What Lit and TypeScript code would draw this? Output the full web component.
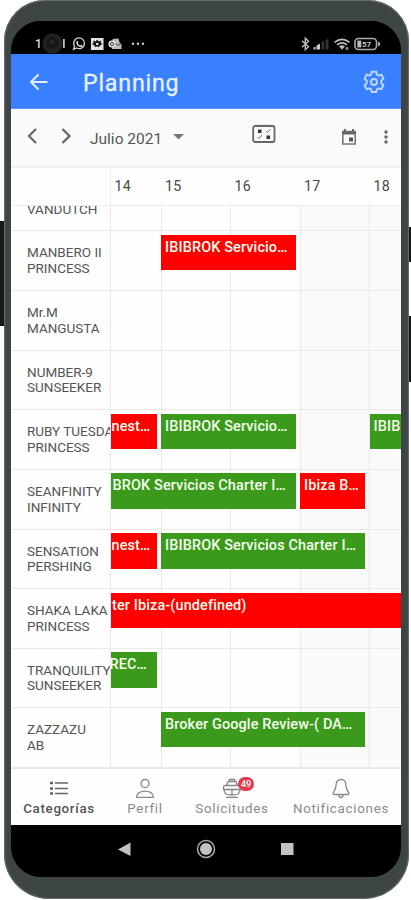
import { LitElement, html, css, svg } from "lit";
import { customElement } from "lit/decorators.js";
import { classMap } from "lit/directives/class-map.js";
import { styleMap } from "lit/directives/style-map.js";

interface Booking {
  from: number;
  to: number;
  label: string;
  color: "red" | "green";
  shift?: number;
}

interface Boat {
  lines: string[];
  bookings: Booking[];
}

const LONG = "IBIBROK Servicio…";

const BOATS: Boat[] = [
  { lines: ["MANBERO II", "PRINCESS"], bookings: [{ from: 2, to: 4, label: LONG, color: "red" }] },
  { lines: ["Mr.M", "MANGUSTA"], bookings: [] },
  { lines: ["NUMBER-9", "SUNSEEKER"], bookings: [] },
  {
    lines: ["RUBY TUESDA", "PRINCESS"],
    bookings: [
      { from: 1, to: 2, label: "nest…", color: "red", shift: 1 },
      { from: 2, to: 4, label: LONG, color: "green" },
      { from: 5, to: 6, label: "IBIB", color: "green" },
    ],
  },
  {
    lines: ["SEANFINITY", "INFINITY"],
    bookings: [
      { from: 1, to: 4, label: "BROK Servicios Charter I…", color: "green", shift: 2 },
      { from: 4, to: 5, label: "Ibiza B…", color: "red" },
    ],
  },
  {
    lines: ["SENSATION", "PERSHING"],
    bookings: [
      { from: 1, to: 2, label: "nest…", color: "red", shift: 1 },
      { from: 2, to: 5, label: "IBIBROK Servicios Charter I…", color: "green" },
    ],
  },
  { lines: ["SHAKA LAKA", "PRINCESS"], bookings: [{ from: 1, to: 6, label: "ter Ibiza-(undefined)", color: "red", shift: 1.5 }] },
  { lines: ["TRANQUILITY", "SUNSEEKER"], bookings: [{ from: 1, to: 2, label: "REC…", color: "green", shift: -1 }] },
  { lines: ["ZAZZAZU", "AB"], bookings: [{ from: 2, to: 5, label: "Broker Google Review-( DA…", color: "green" }] },
];

@customElement("status-bar")
class StatusBar extends LitElement {
  static styles = css`
    :host { display: flex; height: 33px; box-sizing: border-box; padding: 12px 20px 0 24px; background: #000; justify-content: space-between; }
    svg { display: block; }
    .num { font: 700 8px Roboto, sans-serif; fill: #ccc; }
    .clock { font: 500 12px Roboto, sans-serif; fill: #ddd; }
  `;
  render() {
    return html`
      <svg width="112" height="21" viewBox="35 33 112 21">
        <text class="clock" x="35" y="48">1</text>
        <rect x="63" y="39" width="1.8" height="9" fill="#bbb" />
        <circle cx="52.5" cy="43.5" r="10.2" fill="#202222" />
        <circle cx="52.5" cy="43" r="6" fill="#171919" />
        <circle cx="52" cy="42" r="2" fill="#292c2c" />
        <path d="M73.5 49.3l1-3.2a5.4 5.4 0 1 1 2 1.9z" fill="none" stroke="#d5d5d5" stroke-width="1.3" />
        <path d="M76.6 41.2q.8-1 1.4.3l.3 1-.5.8q.8 1.7 2.4 2.2l.9-.8 1.5.8q-.5 2-2.5 1.5-3.3-1-4-4z" fill="#d5d5d5" />
        <rect x="91" y="38" width="12.5" height="12" fill="#e4e4e4" />
        <path d="M97.200 39.500l1.500 2 2.600-1-.6 2.500 2 1-2 1-2 2.200-1.500-1-1.500 1-2-2.200-2-1 2-1-.6-2.500 2.600 1z" fill="#111" />
        <circle cx="97.200" cy="44" r="1.300" fill="#ddd" />
        <path d="M112.500 39l6-.5 1 4 2 1.500v5h-9.500z" fill="#bbb" />
        <rect x="108.500" y="40.500" width="7" height="7" rx="3" fill="#ddd" />
        <circle cx="112" cy="44" r="1.600" fill="none" stroke="#444" />
        <path d="M115.500 43.500l2.500 1.800 3-1.500" fill="none" stroke="#444" />
        <circle cx="133" cy="43.7" r="1.2" fill="#ccc" /><circle cx="138" cy="43.7" r="1.2" fill="#ccc" /><circle cx="143" cy="43.7" r="1.2" fill="#ccc" />
      </svg>
      <svg width="82" height="21" viewBox="299 33 82 21">
        <path d="M302 40.700l6.500 6-3.200 3v-11.500l3.200 3-6.500 6" fill="none" stroke="#bbb" stroke-width="1.400" />
        <path d="M313.500 49.5v-2l2-1v3zM316.500 49.5v-4l3.500-2v6z" fill="#ccc" />
        <path d="M321.500 49.5v-7.500l2.700-1.400v8.900zM325.500 49.5v-9.500l3-1.200v10.700z" fill="#333" />
        <path d="M334.500 42.300q7.500-6 15 0M337 44.800q5-4 10 0" fill="none" stroke="#bbb" stroke-width="1.700" />
        <path d="M339 46.300q3-2 6 0l-3 3.500z" fill="#bbb" />
        <circle cx="347" cy="48.500" r="1.700" fill="#777" />
        <rect x="355" y="38.500" width="21.500" height="11" rx="3.500" fill="none" stroke="#aaa" stroke-width="1.600" />
        <rect x="357.300" y="40.600" width="4" height="6.800" fill="#bbb" />
        <path d="M378 41.500l2 1.200v2.600l-2 1.200z" fill="#aaa" />
        <text class="num" x="362" y="47">57</text>
      </svg>
    `;
  }
}

@customElement("title-bar")
class TitleBar extends LitElement {
  static styles = css`
    :host { display: flex; align-items: center; height: 55px; box-sizing: border-box; padding: 2px 15px 0 18px; background: #3880ff; border-bottom: 1px solid #5c94f5; }
    h1 { flex: 1; margin: 2px 0 0 33px; color: #e7f1ff; font: 400 23.200px/30px Roboto, sans-serif; letter-spacing: 0.800px; -webkit-text-stroke: 0.300px #e7f1ff; }
    svg { display: block; }
  `;
  render() {
    return html`
      <svg width="21" height="20" viewBox="0 0 21 20" fill="none" stroke="#e2ecff" stroke-width="2"><path d="M9.500 2.500L2 10l7.500 7.500M2 10h16.500" /></svg>
      <h1>Planning</h1>
      <svg width="24" height="24" viewBox="0 0 24 24" fill="none" stroke="#bdd6ff" stroke-width="2" stroke-linejoin="round">
        <path d="M9.700 1.800h4.600l.6 2.800 1.600.9 2.700-.9 2.300 4-2.100 1.900v2.900l2.100 1.900-2.300 4-2.700-.9-1.600.9-.6 2.800H9.700l-.6-2.800-1.600-.9-2.700.9-2.300-4 2.100-1.900v-2.900L2.500 8.600l2.300-4 2.700.9 1.600-.9z" />
        <circle cx="12" cy="12" r="3" />
      </svg>
    `;
  }
}

@customElement("month-toolbar")
class MonthToolbar extends LitElement {
  static styles = css`
    :host { display: flex; align-items: center; height: 59px; box-sizing: border-box; padding: 0 10px 3px 14px; background: #fafafa; border-bottom: 2px solid #f0f0f0; color: #555; }
    svg { display: block; flex: none; }
    .month { margin-left: 15px; padding-top: 5px; width: 83px; white-space: nowrap; font: 400 15.500px/20px Roboto, sans-serif; }
    .caret { margin-top: 2px; }
    .grid { margin: -5px 0 0 67px; }
    .today { margin: 2px 0 0 65px; }
    .more { margin: 2px 0 0 26px; }
  `;
  render() {
    return html`
      <svg width="50" height="18" viewBox="0 0 50 18" fill="none" stroke="#666" stroke-width="2.200"><path d="M11 2L4 9l7 7M37.500 2l7 7-7 7" /></svg>
      <span class="month">Julio 2021</span>
      <svg class="caret" width="12" height="8" viewBox="0 0 12 8"><path d="M0 1h11L5.500 6.500z" fill="#777" /></svg>
      <svg class="grid" width="24" height="20" viewBox="0 0 24 20">
        <rect x="1.200" y="2" width="21.300" height="16" rx="2" fill="none" stroke="#666" stroke-width="1.800" />
        <path d="M6 .500v2M9.500.500v2M13 .500v2M16.500.500v2" stroke="#777" />
        <path d="M6 5.500h3.500V9H6zM14.500 11.500H18V15h-3.500z" fill="#333" />
        <path d="M14 7l1.500 1.500L18.500 5M5.500 13L7 14.500l3-3.500" stroke="#777" fill="none" />
      </svg>
      <svg class="today" width="16" height="18" viewBox="0 0 16 18">
        <path d="M1.800 3.500h12.400v12.500H1.800z" fill="none" stroke="#777" stroke-width="1.600" />
        <path d="M1 3h14v3.500H1zM3 1h2v3H3zM11 1h2v3h-2z" fill="#666" /><path d="M8 9.500h4v4H8z" fill="#555" />
      </svg>
      <svg class="more" width="6" height="18" viewBox="0 0 6 18" fill="#666"><circle cx="3" cy="4" r="1.700" /><circle cx="3" cy="9" r="1.700" /><circle cx="3" cy="14" r="1.700" /></svg>
    `;
  }
}

@customElement("planning-grid")
class PlanningGrid extends LitElement {
  static styles = css`
    :host { display: flex; flex-direction: column; height: 600px; overflow: hidden; background: #fefefe; font-family: Roboto, sans-serif; color: #555; }
    .row, .days { display: grid; grid-template-columns: 99px 50.500px 69.500px 69.500px 69.500px 1fr; flex: none; }
    .days { height: 37px; border-bottom: 1px solid #ececec; font-size: 14.200px; line-height: 37px; color: #484848; letter-spacing: 0.350px; }
    .days span { padding-left: 4.500px; }
    .days .first { border-left: 1px solid #eee; padding-left: 4px; margin-left: -0.500px; }
    .row { height: 59.650px; box-sizing: border-box; border-bottom: 1px solid #e9e9e9; }
    .row.cut { height: 25.300px; overflow: hidden; }
    .cut .name { padding-top: 0; margin-top: -4.500px; }
    .name { grid-row: 1; grid-column: 1; padding: 14px 0 0 16px; font-size: 13.500px; line-height: 15.700px; white-space: nowrap; }
    .cell { grid-row: 1; border-left: 1px solid #e9e9e9; }
    .weekend { background: #fafafa; }
    .booking { grid-row: 1; z-index: 1; height: 35.500px; margin: 3.500px 4px 0 0.500px; overflow: hidden; box-sizing: border-box; padding: 4px 0 0 4px; color: #f5fff0; font-size: 14.450px; font-weight: 500; line-height: 18px; white-space: nowrap; letter-spacing: 0.130px; }
    .booking.open { margin-right: 0; }
    .booking.clipped { padding-left: 0; }
    .red { background: #fe0000; }
    .green { background: #3b9a1b; }
    .label { display: block; }
  `;

  cells() {
    return [2, 3, 4, 5, 6].map(
      (c) => html`<div class=${classMap({ cell: true, weekend: c > 4 })} style=${styleMap({ gridColumn: String(c) })}></div>`
    );
  }

  booking(b: Booking) {
    const clipped = b.shift !== undefined;
    return html`<div
      class=${classMap({ booking: true, red: b.color === "red", green: b.color === "green", open: b.to === 6, clipped })}
      style=${styleMap({ gridColumn: `${b.from + 1} / ${b.to + 1}` })}
    ><span class="label" style=${styleMap({ marginLeft: `${b.shift ?? 0}px` })}>${b.label}</span></div>`;
  }

  render() {
    return html`
      <div class="days"><span></span><span class="first">14</span><span>15</span><span>16</span><span>17</span><span>18</span></div>
      <div class="row cut"><div class="name">VANDUTCH</div>${this.cells()}</div>
      ${BOATS.map(
        (boat) => html`<div class="row">
          <div class="name">${boat.lines.map((l) => html`<div>${l}</div>`)}</div>
          ${this.cells()}${boat.bookings.map((b) => this.booking(b))}
        </div>`
      )}
    `;
  }
}

@customElement("tab-bar")
class TabBar extends LitElement {
  static styles = css`
    :host { display: grid; grid-template-columns: 96px 76px 98px 120px; height: 57px; box-sizing: border-box; padding-top: 9px; background: #fefefe; border-top: 1px solid #e4e4e4; font: 400 13.400px/17px Roboto, sans-serif; color: #8b8b8b; }
    .tab { display: flex; flex-direction: column; align-items: center; letter-spacing: 0.700px; white-space: nowrap; }
    .active { color: #555; font-weight: 500; letter-spacing: 0.650px; }
    .icon { position: relative; height: 22px; }
    svg { display: block; }
    .badge { position: absolute; left: 16px; top: -1px; width: 16px; height: 14px; border-radius: 7px; background: #e53950; color: #fff; font: 500 9px/14px Roboto, sans-serif; text-align: center; letter-spacing: 0; }
  `;
  tab(label: string, icon: unknown, active = false, badge = "") {
    return html`<div class=${classMap({ tab: true, active })}>
      <div class="icon"><svg width="20" height="22" viewBox="0 0 20 22" fill="none" stroke=${active ? "#666" : "#888"} stroke-width="1.300">${icon}</svg>${badge ? html`<span class="badge">${badge}</span>` : ""}</div>
      <span>${label}</span>
    </div>`;
  }
  render() {
    return html`
      ${this.tab("Categorías", svg`<path d="M6 5h13M6 10.500h13M6 15.500h13" stroke-width="1.700" /><path d="M1 5h3M1 10.500h3M1 15.500h3" stroke-width="2.600" />`, true)}
      ${this.tab("Perfil", svg`<circle cx="10" cy="5.500" r="4" /><path d="M1.500 19.300C1.500 11 18.500 11 18.500 19.300z" stroke-linejoin="round" />`)}
      ${this.tab("Solicitudes", svg`<path d="M4.500 7.500L6 3.500h8l1.500 4M7.500 3.500v-2h5v2M1.500 9q0-1.500 1.500-1.500h14q1.500 0 1.500 1.500v2l-2 5q-6.500 2-13 0l-2-5zM2 11.500h16M4 19.300h12M10 11.500v5" />`, false, "49")}
      ${this.tab("Notificaciones", svg`<path d="M10 1.500c-3.500 0-5 2.600-5 6 0 5-3 6.500-3 8 0 .800 1 1 1 1h14s1-.200 1-1c0-1.500-3-3-3-8 0-3.400-1.500-6-5-6zM8 17q0 2.500 2 2.500t2-2.500" />`)}
    `;
  }
}

@customElement("app-root")
class AppRoot extends LitElement {
  static styles = css`
    :host { display: block; position: relative; width: 411px; height: 900px; overflow: hidden; background: #fff; }
    .phone { box-sizing: border-box; width: 405px; height: 899px; margin-left: 4px; padding: 21px 8px 22px 7px; border-radius: 41px 41px 45px 45px; background: #3d4545; position: relative; box-shadow: inset 0 0 1px 1px #677070; }
    .screen { display: flex; flex-direction: column; width: 390px; height: 856px; overflow: hidden; border-radius: 30px; background: #000; }
    .side { position: absolute; width: 5px; background: #14191a; }
    .volume { left: 0; top: 221px; height: 105px; }
    .power { right: 0; top: 227px; height: 35px; }
    .lock { right: 0; top: 316px; height: 66px; }
    .nav { display: flex; flex: 1; align-items: flex-start; padding: 14px 0 0 107px; gap: 65px; }
    .nav svg { display: block; }
  `;
  render() {
    return html`
      <div class="side volume"></div><div class="side power"></div><div class="side lock"></div>
      <div class="phone">
        <div class="screen">
          <status-bar></status-bar>
          <title-bar></title-bar>
          <month-toolbar></month-toolbar>
          <planning-grid></planning-grid>
          <tab-bar></tab-bar>
          <div class="nav">
            <svg width="13" height="20" viewBox="0 0 13 20"><path d="M0 10.500L12.500 3.500v13.500z" fill="#c2c2c2" /></svg>
            <svg width="20" height="20" viewBox="0 0 20 20"><circle cx="10" cy="10" r="8.500" fill="none" stroke="#aaa" stroke-width="1.500" /><circle cx="10" cy="10" r="6" fill="#c2c2c2" /></svg>
            <svg width="14" height="20" viewBox="0 0 14 20"><path d="M0 4h12.500v12H0z" fill="#c2c2c2" /></svg>
          </div>
        </div>
      </div>
    `;
  }
}
